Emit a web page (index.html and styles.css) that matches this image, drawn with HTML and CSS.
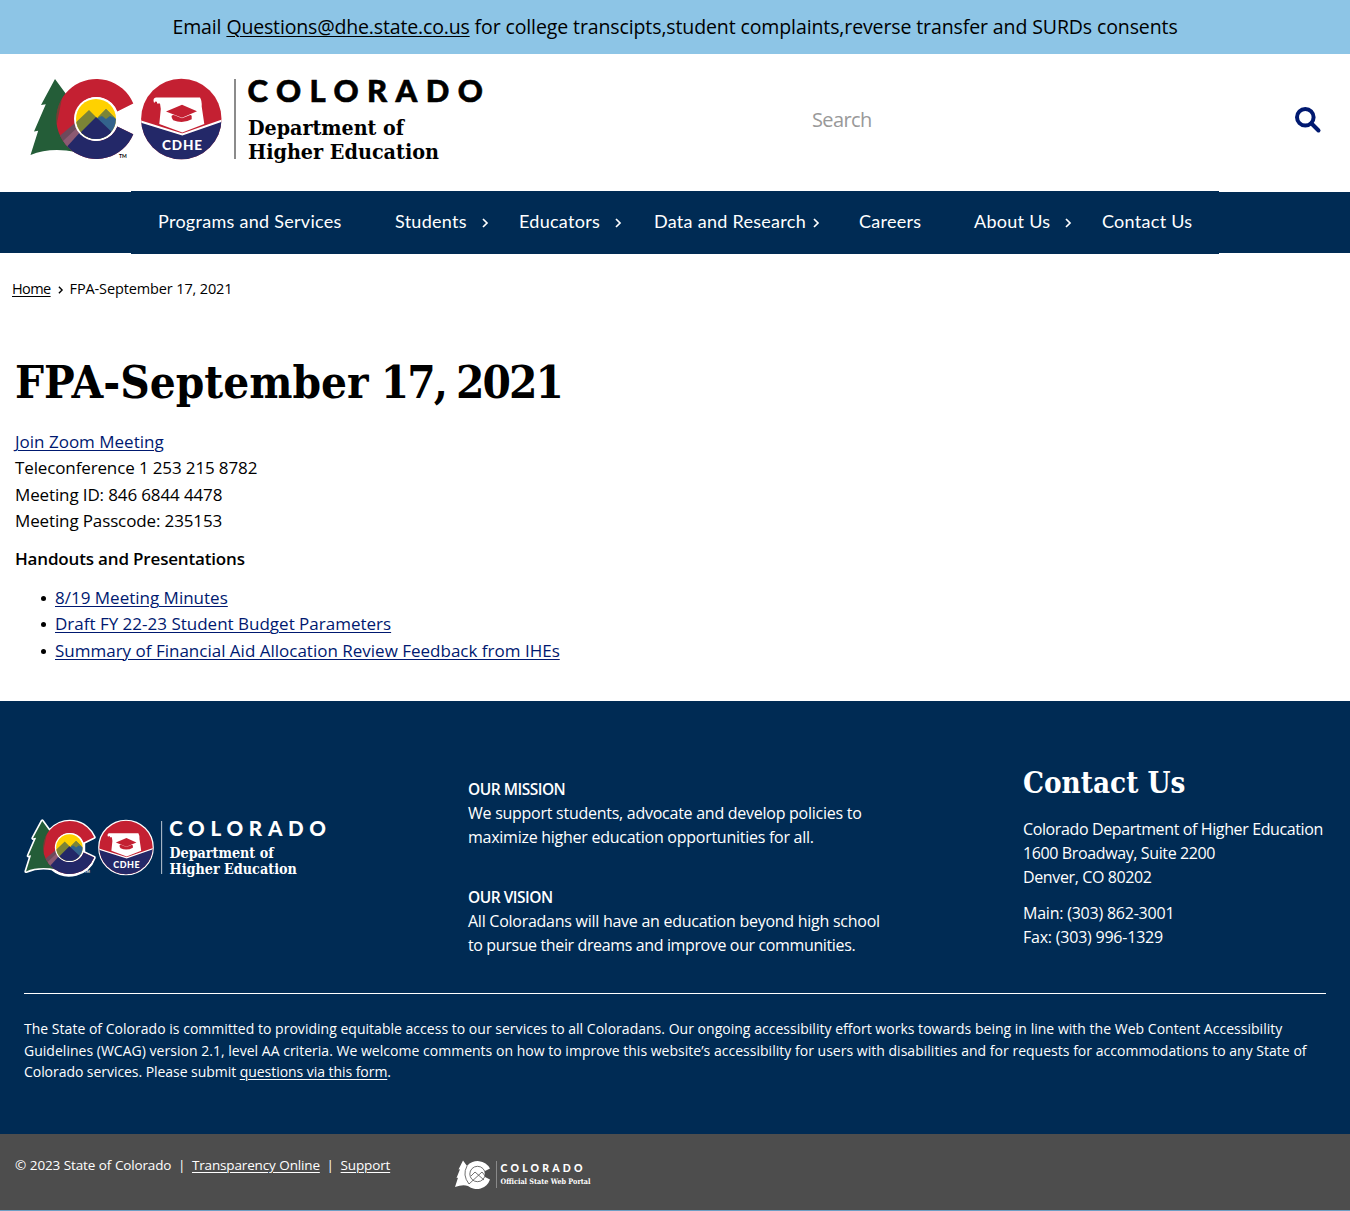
FILE: index.html
```html
<!DOCTYPE html>
<html lang="en">
<head>
<meta charset="utf-8">
<title>FPA-September 17, 2021</title>
<link rel="stylesheet" href="styles.css">
</head>
<body>
<div class="alert"><p>Email <a href="#">Questions@dhe.state.co.us</a> for college transcipts,student complaints,reverse transfer and SURDs consents</p></div>

<header class="header">
  <svg class="logo" viewBox="0 0 460 90" role="img" aria-label="Colorado Department of Higher Education">
    <defs>
      <clipPath id="c-shape"><path d="M103.3 25.6A40 40 0 1 0 103.3 56.2L87.3 48.6A22 22 0 1 1 87.3 33.4Z"/></clipPath>
      <clipPath id="sun"><circle cx="66" cy="41" r="20"/></clipPath>
      <clipPath id="seal"><circle cx="151.3" cy="41" r="40.2"/></clipPath>
      <g id="mark">
        <path fill="#245d38" d="M25 1 11 27l4.800-.8L4 53.500l4.200-.8L.5 77Q20 69 46 74L60 41 36 16Z"/>
        <g clip-path="url(#c-shape)">
          <path fill="#c42032" d="M20 0h90v90H20z"/>
          <path fill="#6d4a5c" d="M20 66 45 45l14 14-20 22H20z"/>
          <path fill="#8c5a72" d="M33 63l15-14 6 8-20 15z"/>
          <path fill="#232868" d="M34 72 62 41h60v49H45z"/>
          <path fill="#245d38" opacity=".5" d="M20 10h14L26 50l4 24H20z"/>
        </g>
        <circle cx="66" cy="41" r="22" fill="#fff"/>
        <g clip-path="url(#sun)">
          <path fill="#ffd100" d="M40 15h52v52H40z"/>
          <path fill="#7c8436" d="m40 50 19-18 9 9-12 20H40z"/>
          <path fill="#33638c" d="m58 50 18-19 18 18v15H58z"/>
          <path fill="#7c8436" d="m67 40 9-9 9 9-5-2-4 3-4-3z"/>
          <path fill="#232868" d="m40 62 8-10 3 2 15-15 20 19v10H40z"/>
        </g>
        <g clip-path="url(#seal)">
          <path fill="#c42032" d="M110 0h84v84h-84z"/>
          <path fill="#232868" d="m110 44 42.300 13L193 43v42h-83z"/>
          <path fill="none" stroke="#fff" stroke-width="2" d="m110 43.300 42.300 13.200L193 42.300"/>
        </g>
        <path fill="#fff" d="M126 19.500h44q2 3 1.700 9l2.600 17.500-22 8.500-23-8.500 1.500-15-.8-5.500h-3q.5-2-1-2-1.300 0-1.200 1.200l-1-.5q-1.200-4.200 2.200-4.700z"/>
        <path fill="#c42032" d="m136 33.500 16-6.700 15 6.500-15 6.500zM141.500 38q1-1.500 3-.8l7.500 3 7.500-3q2-.5 2.200 1v3q-9 5-18.500 1-1.700-1.500-1.700-4.200z"/>
        <text x="132" y="72" class="seal-text" textLength="40">CDHE</text>
      </g>
    </defs>
    <use href="#mark"/>
    <text x="89" y="79.500" class="tm">TM</text>
    <path d="M205 1v80" stroke="#777" stroke-width="1.700"/>
    <text x="217.500" y="23.500" class="word" textLength="235.500">COLORADO</text>
    <text x="218" y="57.300" class="dept" textLength="156" lengthAdjust="spacingAndGlyphs">Department of</text>
    <text x="218" y="80.800" class="dept" textLength="191" lengthAdjust="spacingAndGlyphs">Higher Education</text>
  </svg>
  <form class="search">
    <input type="text" placeholder="Search" aria-label="Search">
    <svg class="glass" viewBox="0 0 26 26"><circle cx="10.300" cy="10.300" r="8.300"/><path d="m16.500 16.500 7 7"/></svg>
  </form>
</header>

<nav class="nav">
  <ul>
    <li><a>Programs and Services</a></li>
    <li><a>Students</a><svg class="chev" viewBox="0 0 6 10"><path d="m1 1 4 4-4 4"/></svg></li>
    <li><a>Educators</a><svg class="chev" viewBox="0 0 6 10"><path d="m1 1 4 4-4 4"/></svg></li>
    <li class="tight"><a>Data and Research</a><svg class="chev" viewBox="0 0 6 10"><path d="m1 1 4 4-4 4"/></svg></li>
    <li><a>Careers</a></li>
    <li><a>About Us</a><svg class="chev" viewBox="0 0 6 10"><path d="m1 1 4 4-4 4"/></svg></li>
    <li><a>Contact Us</a></li>
  </ul>
</nav>

<main class="main">
  <div class="crumbs"><a href="#">Home</a><svg class="chev" viewBox="0 0 6 10"><path d="m1 1 4 4-4 4"/></svg><span>FPA-September 17, 2021</span></div>
  <h1><span>FPA-September <b>17, 2021</b></span></h1>
  <p class="meeting"><a href="#">Join Zoom Meeting</a><br><span>Teleconference 1 253 215 8782</span><br><span>Meeting ID: 846 6844 4478</span><br><span>Meeting Passcode: 235153</span></p>
  <p class="subhead"><strong>Handouts and Presentations</strong></p>
  <ul>
    <li><a href="#">8/19 Meeting Minutes</a></li>
    <li><a href="#">Draft FY 22-23 Student Budget Parameters</a></li>
    <li><a href="#">Summary of Financial Aid Allocation Review Feedback from IHEs</a></li>
  </ul>
</main>

<footer class="footer">
  <div class="cols">
    <svg class="logo-small" viewBox="-1 -2 460 92" role="img" aria-label="Colorado Department of Higher Education">
      <path class="outline" d="M25 1 11 27l4.800-.8L4 53.500l4.200-.8L.5 77Q20 69 40 73A40 40 0 0 0 103.300 56.200L87.300 48.600V33.400L103.300 25.600A40 40 0 0 0 36 16Z"/>
      <circle class="outline" cx="151.300" cy="41" r="39.500"/>
      <use href="#mark"/>
      <path d="M205 1v80" stroke="#a9b7c6" stroke-width="1.700"/>
      <text x="89" y="79.500" class="tm light">TM</text>
      <text x="216.500" y="23.500" class="word light" textLength="236.500">COLORADO</text>
      <text x="217" y="57.300" class="dept light" textLength="157" lengthAdjust="spacingAndGlyphs">Department of</text>
      <text x="217" y="80.800" class="dept light" textLength="192" lengthAdjust="spacingAndGlyphs">Higher Education</text>
    </svg>
    <div class="mission">
      <p><strong>OUR MISSION</strong><br>We support students, advocate and develop policies to<br>maximize higher education opportunities for all.</p>
      <p><strong>OUR VISION</strong><br>All Coloradans will have an education beyond high school<br><span>to pursue their dreams and improve our communities.</span></p>
    </div>
    <div class="contact">
      <h2><span>Contact Us</span></h2>
      <p class="address">Colorado Department of Higher Education<br>1600 Broadway, Suite 2200<br>Denver, CO 80202</p>
      <p>Main: (303) 862-3001<br>Fax: (303) 996-1329</p>
    </div>
  </div>
  <p class="access">The State of Colorado is committed to providing equitable access to our services to all Coloradans. Our ongoing accessibility effort works towards being in line with the Web Content Accessibility<br>Guidelines (WCAG) version 2.1, level AA criteria. We welcome comments on how to improve this website’s accessibility for users with disabilities and for requests for accommodations to any State of<br><span>Colorado services. Please submit <a href="#">questions via this form</a>.</span></p>
</footer>

<div class="bottom">
  <p>© 2023 State of Colorado <i>|</i> <a href="#">Transparency Online</a> <i>|</i> <a href="#">Support</a></p>
  <svg class="portal" viewBox="0 0 136 30" role="img" aria-label="Colorado Official State Web Portal">
    <path fill="#fff" d="M8 .5 3.500 9.500l1.500-.3L1.500 18l1.500-.3L0 27q8-3 13-1A14 14 0 0 0 35 19.500L30 17V11L35 8.500A14 14 0 0 0 12 6Z"/>
    <g fill="none" stroke="#4d4d4d" stroke-width=".8"><circle cx="22.500" cy="14" r="7.700"/><path d="M12 6q-5 9 2 18L27 12l4 5M16 16l4-4 9 8"/></g>
    <path d="M41.500 1v27" stroke="#999" stroke-width=".8"/>
    <text x="45.500" y="11.500" class="portal-word" textLength="82">COLORADO</text>
    <text x="45.500" y="23.600" class="portal-sub" textLength="90" lengthAdjust="spacingAndGlyphs">Official State Web Portal</text>
  </svg>
</div>
</body>
</html>
```
FILE: styles.css
```css
* { box-sizing: border-box; }
body { margin: 0; background: #fff; color: #000; font: 17px/26.4px "Open Sans", "Noto Sans", sans-serif; }
p, h1, h2, ul { margin: 0; padding: 0; }
a { color: inherit; text-underline-offset: 2px; text-decoration-thickness: 1px; }
strong { font-weight: 600; }
svg { overflow: visible; }

.alert { height: 54px; background: #8dc5e6; text-align: center; font-size: 19.5px; line-height: 54px; letter-spacing: -.11px; white-space: nowrap; }
.alert a { letter-spacing: -.16px; }

.header { display: flex; justify-content: space-between; height: 138px; padding: 24px 30px 0; }
.logo { width: 460px; height: 90px; }
.seal-text { font: 900 13.5px Lato, sans-serif; fill: #fff; }
.tm { font: 700 5px Lato, sans-serif; }
.word { font: 900 31px Lato, sans-serif; stroke: #000; stroke-width: .6; }
.dept { font: 700 21px "DejaVu Serif", serif; }
.light { fill: #fff; stroke: none; }
.search { display: flex; justify-content: space-between; width: 509px; height: 84px; margin-right: -1px; align-items: center; }
.search input { width: 300px; padding: 0 0 2px; border: 0; outline: 0; font: 20px "Open Sans", sans-serif; letter-spacing: -.6px; }
.search input::placeholder { color: #999; }
.glass { width: 26px; height: 26px; fill: none; stroke: #001970; stroke-width: 4; stroke-linecap: round; }

.nav { height: 61px; background: #002b54; color: #fff; display: flex; justify-content: center; }
.nav ul { display: grid; grid-template-columns: 237px 124px 135px 205px 115px 128px 117px; padding-left: 27px; width: 1088px; height: 63px; margin-top: -1px; background: #002b54; list-style: none; }
.nav li { display: flex; align-items: center; font: 18px Lato, sans-serif; letter-spacing: .28px; white-space: nowrap; }
.nav li a { margin-top: -3px; }
.chev { width: 6px; height: 10px; fill: none; stroke: currentColor; stroke-width: 1.7; }
.nav .chev { margin: 1px 0 0 15px; }
.nav .tight .chev { margin-left: 7px; }

.main { height: 448px; padding: 0 15px; }
.crumbs { display: flex; align-items: center; height: 72px; margin-left: -3px; font-size: 14.500px; letter-spacing: -.13px; }
.crumbs a { letter-spacing: -.6px; }
.crumbs .chev { width: 5px; height: 8px; margin: 2px 7px 0 7px; }
h1 { height: 60px; margin-top: 28px; font: 700 45px/60px "DejaVu Serif", serif; font-stretch: condensed; white-space: nowrap; }
h1 span, h2 span { display: inline-block; transform-origin: 0 50%; }
h1 span { transform: scaleX(1.01); word-spacing: -2px; }
h1 b { letter-spacing: -2px; }
h2 span { transform: scaleX(.91); }
.main p { margin-bottom: 12px; }
.main strong { letter-spacing: -.17px; }
.main .meeting { margin: 16px 0 11px; }
.main .subhead { margin-bottom: 13px; }
.meeting span { letter-spacing: -.13px; }
.main p a, .main li a { color: #001970; }
.main ul { padding-left: 26px; list-style: none; }
.main li { display: flex; align-items: center; gap: 9px; }
.main li::before { content: ""; width: 5px; height: 5px; border-radius: 50%; background: #000; }

.footer { height: 433px; background: #002b54; color: #fff; padding: 0 24px; }
.cols { display: grid; grid-template-columns: 444px 555px 1fr; height: 293px; border-bottom: 1px solid #fff; font-size: 16px; line-height: 24px; white-space: nowrap; }
.logo-small { width: 307px; height: 61px; margin-top: 118px; }
.outline { fill: #fff; stroke: #fff; stroke-width: 5; stroke-linejoin: round; }
.mission { padding-top: 76px; letter-spacing: -.26px; }
.mission p { margin-bottom: 36px; }
.mission span { letter-spacing: -.37px; }
.mission strong { font-size: 15.500px; letter-spacing: -.5px; }
.contact { padding-top: 64px; }
.contact p { margin-bottom: 12px; letter-spacing: -.22px; }
.contact .address { letter-spacing: -.38px; }
h2 { height: 36px; margin-bottom: 16px; font: 700 29px/36px "DejaVu Serif", serif; }
.access { padding-top: 24px; font-size: 14px; line-height: 21.600px; letter-spacing: .02px; white-space: nowrap; }
.access span { letter-spacing: -.05px; }

.bottom { display: flex; height: 77px; background: #4d4d4d; color: #fff; padding-left: 15px; border-bottom: 1px solid #6f9fc4; font-size: 13.500px; letter-spacing: -.16px; }
.bottom p { width: 440px; padding-top: 18px; white-space: nowrap; word-spacing: .4px; }
.bottom i { font-style: normal; margin: 0 3px; }
.portal { width: 136px; height: 30px; margin-top: 26px; letter-spacing: 0; }
.portal-word { font: 900 10.500px Lato, sans-serif; fill: #fff; }
.portal-sub { font: 700 7.500px "DejaVu Serif", serif; fill: #fff; }
```
